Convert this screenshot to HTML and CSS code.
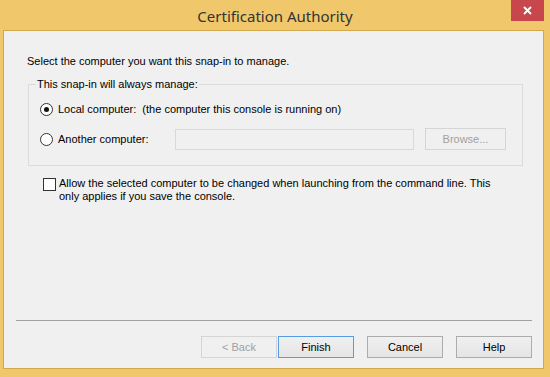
FILE: index.html
```html
<!DOCTYPE html>
<html lang="en">
<head>
    <meta charset="UTF-8">
    <meta name="viewport" content="width=device-width, initial-scale=1.0">
    <title>Certification Authority</title>
    <link rel="stylesheet" href="styles.css">
</head>
<body>
    <div class="window">
        <div class="title-bar">
            <span class="title">Certification Authority</span>
            <button class="close-btn" aria-label="Close">
                <svg width="9" height="9" viewBox="0 0 9 9">
                    <path d="M1 1 L8 8 M8 1 L1 8" stroke="#fff" stroke-width="1.8" fill="none"/>
                </svg>
            </button>
        </div>
        <div class="client">
            <div class="content">
                <p class="intro">Select the computer you want this snap-in to manage.</p>

                <fieldset class="group">
                    <legend>This snap-in will always manage:</legend>
                    <div class="row row-local">
                        <input type="radio" name="target" id="local" checked>
                        <label for="local">Local computer:&nbsp; (the computer this console is running on)</label>
                    </div>
                    <div class="row row-other">
                        <input type="radio" name="target" id="other">
                        <label for="other" class="other-label">Another computer:</label>
                        <input type="text" class="computer-name" disabled>
                        <button class="btn browse-btn" disabled>Browse...</button>
                    </div>
                </fieldset>

                <div class="check-row">
                    <input type="checkbox" id="allowChange">
                    <label for="allowChange">Allow the selected computer to be changed when launching from the command line. This only applies if you save the console.</label>
                </div>
            </div>

            <div class="separator"></div>

            <div class="buttons">
                <button class="btn" disabled>&lt; Back</button>
                <button class="btn btn-default">Finish</button>
                <button class="btn btn-gap">Cancel</button>
                <button class="btn btn-gap">Help</button>
            </div>
        </div>
    </div>
</body>
</html>
```

FILE: styles.css
```css
body {
    margin: 0;
    padding: 0;
    background-color: #f0c86b;
    font-family: "Liberation Sans", Arial, sans-serif;
    font-size: 11px;
    color: #000;
}
.window {
    width: 550px;
    height: 377px;
    display: flex;
    flex-direction: column;
}
.title-bar {
    height: 30px;
    position: relative;
    display: flex;
    align-items: center;
    justify-content: center;
}
.title {
    font-family: "Noto Sans", "Open Sans", sans-serif;
    font-size: 15px;
    color: #333;
    margin-top: 1px;
}
.close-btn {
    position: absolute;
    top: 0;
    right: 6px;
    width: 33px;
    height: 21px;
    border: none;
    padding: 0;
    background-color: #c7474d;
    display: flex;
    align-items: center;
    justify-content: center;
}
.client {
    margin: 0 6px 8px 3px;
    height: 337px;
    border: 1px solid #d3a84c;
    background-color: #f0f0f0;
    display: flex;
    flex-direction: column;
}
.content {
    flex: 1;
}
.intro {
    margin: 24px 0 0 23px;
    line-height: 13px;
}
.group {
    margin: 10px 20px 0 24px;
    padding: 10px 15px 15px 7px;
    border: 1px solid #dcdcdc;
}
.group legend {
    padding: 0 1px;
    line-height: 13px;
}
.row {
    display: flex;
    align-items: center;
    margin-left: 4px;
}
.row-local {
    height: 16px;
}
.row-other {
    height: 22px;
    margin-top: 11px;
}
input[type="radio"] {
    appearance: none;
    margin: 0 5px 0 0;
    width: 13px;
    height: 13px;
    border: 1px solid #333;
    border-radius: 50%;
    background-color: #fff;
    display: flex;
    align-items: center;
    justify-content: center;
}
input[type="radio"]:checked::before {
    content: "";
    width: 5px;
    height: 5px;
    border-radius: 50%;
    background-color: #111;
}
.other-label {
    width: 117px;
}
.computer-name {
    width: 239px;
    height: 21px;
    box-sizing: border-box;
    margin: 0;
    border: 1px solid #d9d9d9;
    background-color: #f0f0f0;
}
.btn {
    width: 76px;
    height: 22px;
    box-sizing: border-box;
    padding: 0;
    border: 1px solid #acacac;
    background: linear-gradient(#f0f0f0, #e5e5e5);
    font-family: "Liberation Sans", Arial, sans-serif;
    font-size: 11px;
    color: #000;
}
.btn:disabled {
    border-color: #d5d5d5;
    background: #f0f0f0;
    color: #a0a0a0;
}
.browse-btn {
    width: 81px;
    margin-left: 11px;
}
.check-row {
    display: flex;
    align-items: flex-start;
    margin: 11px 0 0 39px;
}
input[type="checkbox"] {
    appearance: none;
    margin: 1px 3px 0 0;
    width: 13px;
    height: 13px;
    border: 1px solid #333;
    background-color: #fff;
    flex-shrink: 0;
}
.check-row label {
    width: 448px;
    line-height: 13px;
}
.separator {
    height: 1px;
    margin: 0 11px 0 12px;
    background-color: #a0a0a0;
}
.buttons {
    display: flex;
    justify-content: flex-end;
    gap: 1px;
    padding: 15px 11px 10px 0;
}
.btn-default {
    border-color: #569de5;
}
.btn-gap {
    margin-left: 12px;
}
```
